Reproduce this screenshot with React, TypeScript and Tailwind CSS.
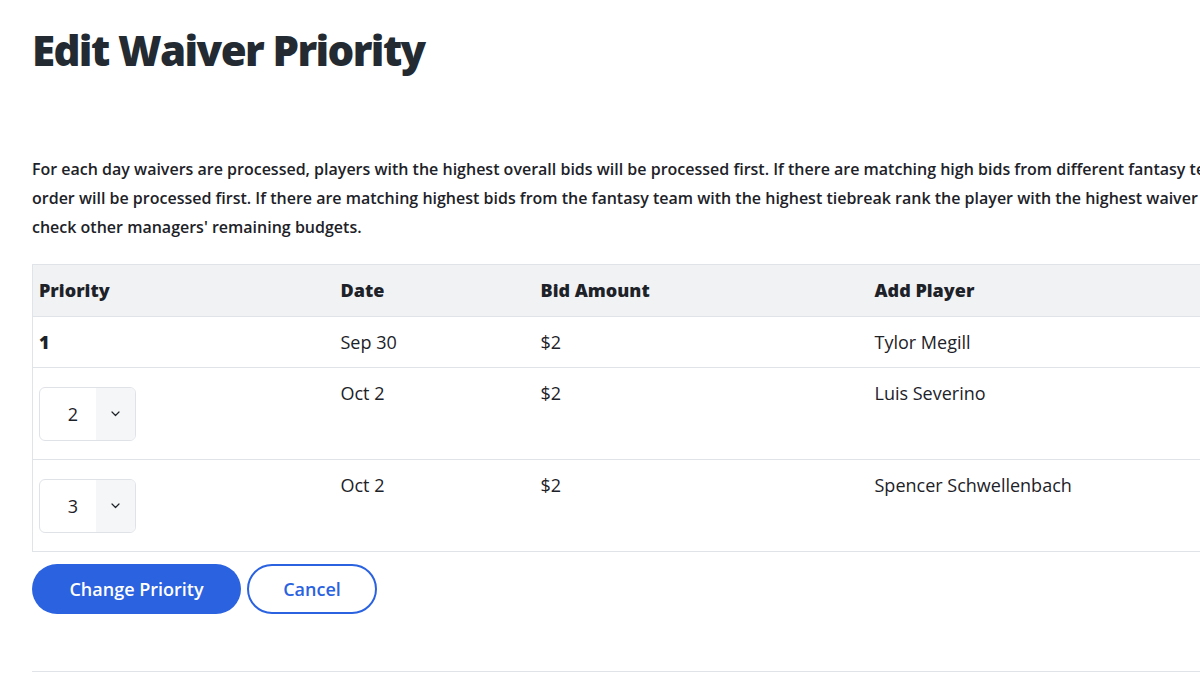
import React, { useState } from 'react';

interface WaiverClaim {
  id: string;
  priority: number;
  date: string;
  bid: string;
  player: string;
}

const claims: WaiverClaim[] = [
  { id: 'c1', priority: 1, date: 'Sep 30', bid: '$2', player: 'Tylor Megill' },
  { id: 'c2', priority: 2, date: 'Oct 2', bid: '$2', player: 'Luis Severino' },
  { id: 'c3', priority: 3, date: 'Oct 2', bid: '$2', player: 'Spencer Schwellenbach' },
];

const PrioritySelect: React.FC<{ value: number }> = ({ value }) => {
  const [current, setCurrent] = useState(value);

  return (
    <div className="relative flex h-[54px] w-[97px] overflow-hidden rounded-[6px] border border-[#dfe3e8] bg-white">
      <div className="flex w-[56px] items-center justify-center pl-[10px] text-[18px] text-[#1d2228]">{current}</div>
      <div className="flex flex-1 items-center justify-center bg-[#f5f6f8]">
        <svg width="9" height="6" viewBox="0 0 9 6" fill="none">
          <path d="M1 1l3.5 3.5L8 1" stroke="#1d2228" strokeWidth="1.2" strokeLinecap="round" strokeLinejoin="round" />
        </svg>
      </div>
      <select
        value={current}
        onChange={(e) => setCurrent(Number(e.target.value))}
        className="absolute inset-0 cursor-pointer opacity-0"
      >
        <option value={2}>2</option>
        <option value={3}>3</option>
      </select>
    </div>
  );
};

const App: React.FC = () => {
  return (
    <div className="h-[673px] w-[1200px] overflow-hidden bg-white font-['Open_Sans',sans-serif] text-[#1d2228]">
      <div className="w-[1400px] pl-[32px]">
        <h1 className="pt-[25px] text-[42px] font-extrabold leading-[50px] tracking-[-1.6px] text-[#232a31]">
          Edit Waiver Priority
        </h1>

        {/* Rules text runs past the right edge of the window */}
        <div className="mt-[80px] w-[1168px] text-[16px] font-semibold leading-[29px] text-[#1d2228]">
          <p className="whitespace-nowrap">
            For each day waivers are processed, players with the highest overall bids will be processed first. If there are matching high bids from different fantasy te
          </p>
          <p className="whitespace-nowrap">
            order will be processed first. If there are matching highest bids from the fantasy team with the highest tiebreak rank the player with the highest waiver
          </p>
          <p>check other managers' remaining budgets.</p>
        </div>

        <table className="mt-[22px] w-[1330px] border-collapse border border-[#e0e4e9] text-left text-[18px]">
          <thead className="bg-[#f1f2f4]">
            <tr className="h-[52px]">
              <th className="w-[301px] pl-[6px] font-extrabold">Priority</th>
              <th className="w-[200px] pl-[7px] font-extrabold">Date</th>
              <th className="w-[334px] pl-[7px] font-extrabold">Bid Amount</th>
              <th className="pl-[7px] font-extrabold">Add Player</th>
            </tr>
          </thead>
          <tbody>
            {claims.map((claim) => (
              <tr key={claim.id} className="border-t border-[#e0e4e9] align-top">
                {claim.priority === 1 ? (
                  <td className="pl-[6px] pt-[13px] pb-[13px] font-extrabold leading-[24px]">{claim.priority}</td>
                ) : (
                  <td className="pl-[6px] pt-[19px] pb-[18px]">
                    <PrioritySelect value={claim.priority} />
                  </td>
                )}
                <td className="pl-[7px] pt-[13px] leading-[24px]">{claim.date}</td>
                <td className="pl-[7px] pt-[13px] leading-[24px]">{claim.bid}</td>
                <td className="pl-[7px] pt-[13px] leading-[24px]">{claim.player}</td>
              </tr>
            ))}
          </tbody>
        </table>

        <div className="mt-[12px] flex gap-[6px]">
          <button className="h-[50px] w-[209px] rounded-full bg-[#2a62e0] text-[18px] font-semibold text-white">
            Change Priority
          </button>
          <button className="h-[50px] w-[130px] rounded-full border-2 border-[#2a62e0] bg-white text-[18px] font-semibold text-[#2a62e0]">
            Cancel
          </button>
        </div>

        <div className="mt-[57px] border-t border-[#e0e4e9]" />
      </div>
    </div>
  );
};

export default App;
